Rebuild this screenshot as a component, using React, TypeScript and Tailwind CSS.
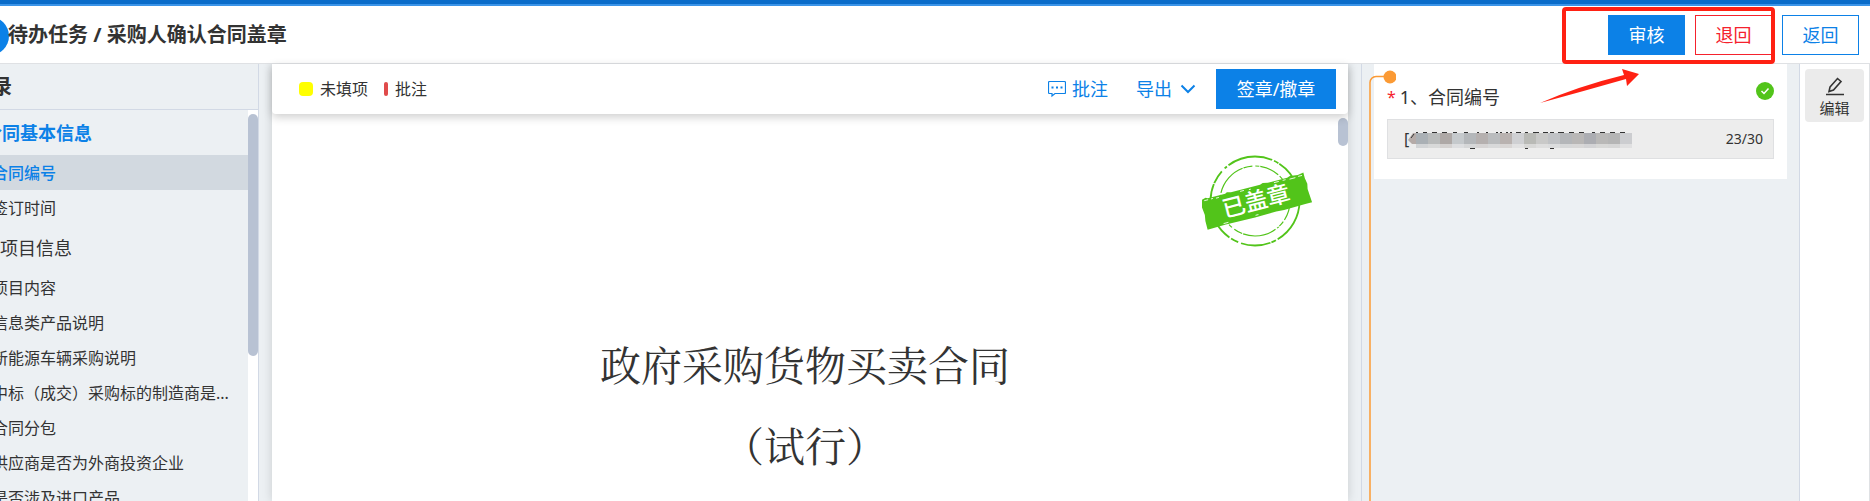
import React from "react";

const sans = "font-['Noto_Sans','Noto_Sans_CJK_SC',sans-serif]";

type Entry = { label: string; kind: "group" | "item"; state?: "open" | "active" };

const entries: Entry[] = [
  { label: "合同基本信息", kind: "group", state: "open" },
  { label: "合同编号", kind: "item", state: "active" },
  { label: "签订时间", kind: "item" },
  { label: "项目信息", kind: "group" },
  { label: "项目内容", kind: "item" },
  { label: "信息类产品说明", kind: "item" },
  { label: "新能源车辆采购说明", kind: "item" },
  { label: "中标（成交）采购标的制造商是...", kind: "item" },
  { label: "合同分包", kind: "item" },
  { label: "供应商是否为外商投资企业", kind: "item" },
  { label: "是否涉及进口产品", kind: "item" },
];

function entryClass(e: Entry) {
  if (e.kind === "group") {
    return e.state === "open"
      ? "h-[45px] -ml-4 text-lg font-bold text-[#0c81e7]"
      : "h-[45px] text-lg";
  }
  return e.state === "active"
    ? "h-[35px] -ml-2 text-base font-medium text-[#0c81e7]"
    : "h-[35px] -ml-2 text-base";
}

function Stamp() {
  return (
    <svg className="absolute top-10 right-6 h-24 w-[112px]" viewBox="0 0 112 96" role="img" aria-label="已盖章">
      <g fill="none" stroke="#52c41a">
        <circle cx="53" cy="47" r="44.5" strokeWidth="1.8" strokeDasharray="46 2 5 1 30 3 8 2 60 1 14 4 3 2" />
        <circle cx="53" cy="47" r="35" strokeWidth="1.2" strokeDasharray="20 2 6 1 2 2 34 1 9 3 4 1" />
      </g>
      <g transform="rotate(-14.500 55 47)">
        <path
          d="M2 32l4-1 2 1h18l2-1 4 1h30l3-1 5 1h20l3-1 8 1 6-1v6l1 6-1 5 1 14-7 0-22 .5-8-.5-22 .5-30-.5-19 .5v-9l1-6-1-9z"
          fill="#52c41a"
        />
        <path
          d="M4 33.500h4m3 0h2m3 .5h3m22-.5h4m5 .5h2m24-.5h5m4 0h3m4 .5h6m3-.5h4m-88 27h5m28 0h3"
          stroke="#fff"
          strokeWidth=".8"
        />
        <text x="54" y="55" textAnchor="middle" fill="#fff" fontSize="23" fontWeight="500">
          已盖章
        </text>
      </g>
    </svg>
  );
}

const tiles = [
  "#aab0b5", "#b9bbbb", "#aea8a6", "#c5c9cc", "#b4b7ba", "#b5b0af", "#babcbe", "#b9b2b0", "#cfd0d3",
  "#b9bab6", "#c9c9c8", "#c0c2c5", "#b4b6b9", "#b9b7b6", "#acadb2", "#b9b8b7", "#b5b5b5", "#cccdd0",
];

function Mosaic() {
  return (
    <svg className="absolute top-3 left-5 h-[18px] w-[228px]" viewBox="0 0 228 18" aria-hidden="true">
      <path
        d="M8 .5h2M15 .5h4M24 .5h5M34 .5h5M45 .5h4M56 .5h4M69 .5h2M78 .5h2M88 .5h2M92 .5h2M98 .5h2M102 .5h2M108 .5h5M117 .5h3M125 .5h6M135 .5h5M142 .5h4M150 .5h6M161 .5h5M171 .5h5M184 .5h3M192 .5h5M202 .5h5M212 .5h5M62 16.500h5M117 16.500h3M142 16.500h4"
        stroke="#333"
        fill="none"
      />
      <path d="M0 8l5-7h3v11H4z" fill="#b5aba8" />
      <path d="M3 6l3-4" stroke="#333" />
      {tiles.map((c, i) => (
        <g key={i} fill={c}>
          <rect x={8 + i * 12} y="1" width="12" height="11" />
          <rect x={8 + i * 12} y="12" width="12" height="4" opacity=".4" />
        </g>
      ))}
    </svg>
  );
}

export default function App() {
  return (
    <div className={`flex h-screen flex-col overflow-hidden bg-[#ecf0f3] text-[#333] ${sans}`}>
      <div className="h-1.5 shrink-0 border-b-2 border-[#3b94e8] bg-[#0a6cc9]" />
      <header className="relative flex h-[58px] shrink-0 items-center justify-between border-b border-[#dfe1e4] bg-white pr-[11px] pl-2">
        <span className="absolute top-[11px] -left-[29px] size-[38px] rounded-full bg-[#0c81e7]" />
        <h1 className="relative text-xl font-bold whitespace-nowrap">待办任务 / 采购人确认合同盖章</h1>
        <div className="flex gap-2.5 text-lg">
          <button className="h-10 w-[77px] bg-[#0c81e7] text-white">审核</button>
          <button className="h-10 w-[77px] border border-[#f5222d] text-[#f5222d]">退回</button>
          <button className="h-10 w-[77px] border border-[#0c81e7] text-[#0c81e7]">返回</button>
        </div>
        <svg className="absolute top-0 right-[93px] z-20 h-[102px] w-[238px]" viewBox="0 0 238 102" aria-hidden="true">
          <rect x="25" y="3" width="209" height="53" rx="2" fill="none" stroke="#ff2113" strokeWidth="4" />
          <path d="M1 97Q40 80 85 69L83 63l17 5-12 12-1-7Q45 85 1 97z" fill="#ff2113" />
        </svg>
      </header>

      <div className="flex min-h-0 flex-1">
        <aside className="flex w-[259px] shrink-0 flex-col overflow-hidden border-r border-[#d2d9e5]">
          <h2 className="flex h-[46px] shrink-0 items-center border-b border-[#d2d9e5] text-xl font-bold">
            <span className="-ml-2">录</span>
          </h2>
          <div className="flex min-h-0 flex-1">
            <ul className="min-w-0 flex-1">
              {entries.map((e) => (
                <li key={e.label} className={e.state === "active" ? "bg-[#d2d9e0]" : ""}>
                  <a href="#" className={`flex items-center whitespace-nowrap ${entryClass(e)}`}>
                    {e.label}
                  </a>
                </li>
              ))}
            </ul>
            <div className="w-2.5 bg-white pt-1">
              <div className="h-[242px] rounded-full bg-[#b8c2d3]" />
            </div>
          </div>
        </aside>

        <main className="ml-[13px] flex min-w-0 flex-1 flex-col bg-white shadow-[0_0_10px_rgba(0,0,0,0.15)]">
          <div className="z-10 flex h-[50px] shrink-0 items-center rounded-b bg-white pr-3 pl-[27px] shadow-[0_3px_10px_rgba(0,0,0,0.2)]">
            <span className="size-3.5 rounded-sm bg-[#ff0]" />
            <span className="ml-[7px] text-base">未填项</span>
            <span className="ml-4 h-3.5 w-1 rounded-sm bg-[#e04b4b]" />
            <span className="ml-[7px] text-base">批注</span>
            <button className="ml-auto flex items-center gap-1.5 text-lg text-[#0c81e7]">
              <svg className="size-[18px]" viewBox="0 0 18 18" fill="none" stroke="currentColor" aria-hidden="true">
                <path
                  d="M1.500 1.500h15a1 1 0 0 1 1 1v10a1 1 0 0 1-1 1H7l-3 2.500v-2.500H1.500a1 1 0 0 1-1-1v-10a1 1 0 0 1 1-1z"
                  strokeWidth="1.2"
                />
                <path d="M3.500 7.500h2m2.500 0h2m2.500 0h2" strokeWidth="2" />
              </svg>
              批注
            </button>
            <button className="ml-7 flex items-center gap-2 text-lg text-[#0c81e7]">
              导出
              <svg className="size-4" viewBox="0 0 16 16" fill="none" stroke="currentColor" strokeWidth="2" aria-hidden="true">
                <path d="M1.500 4.500L8 11l6.500-6.500" />
              </svg>
            </button>
            <button className="ml-5 h-10 w-[120px] bg-[#0c81e7] text-lg text-white">签章/撤章</button>
          </div>
          <div className="flex min-h-0 flex-1">
            <article className="relative flex-1 pt-[209px] text-center font-['Noto_Serif_CJK_SC','Noto_Serif_SC','Liberation_Serif','Noto_Sans_CJK_SC',serif] text-[41px] leading-[81px]">
              <div className={sans}>
                <Stamp />
              </div>
              <p>政府采购货物买卖合同</p>
              <p>（试行）</p>
            </article>
            <div className="w-2.5 bg-white pt-1">
              <div className="h-7 rounded-full bg-[#b8c2d3]" />
            </div>
          </div>
        </main>

        <section className="relative ml-[13px] w-[439px] shrink-0 border-x border-[#d2d9e5] px-3">
          <div className="h-[115px] bg-white px-[13px] pt-5">
            <div className="flex h-[26px] items-center text-lg">
              <span className="mr-1 text-base text-[#f5222d]">*</span>
              <label htmlFor="contract-no">1、合同编号</label>
              <svg className="-mt-3 ml-auto size-[18px]" viewBox="0 0 18 18" aria-hidden="true">
                <circle cx="9" cy="9" r="9" fill="#52c41a" />
                <path d="M5.500 9l2.500 2.500 4.500-5" fill="none" stroke="#fff" strokeWidth="1.5" />
              </svg>
            </div>
            <div className="relative mt-[9px] flex h-10 items-center border border-[#dfe0e2] bg-[#ededed] pr-2.5 pl-4">
              <input
                id="contract-no"
                defaultValue="["
                readOnly
                className="min-w-0 flex-1 bg-transparent text-base outline-none"
              />
              <Mosaic />
              <span className="text-sm">23/30</span>
            </div>
          </div>
          <svg className="absolute top-1.5 left-1.5 h-[431px] w-7" viewBox="0 0 28 431" aria-hidden="true">
            <path d="M22 6.500H8a6 6 0 0 0-6 6V431" fill="none" stroke="#fb9a34" strokeWidth="1.5" />
            <circle cx="22" cy="7" r="6.500" fill="#fb9a34" />
          </svg>
        </section>

        <nav className="flex w-[70px] shrink-0 flex-col items-center border-r border-[#dfe1e4] bg-white pt-[5px]">
          <button className="flex h-[53px] w-[59px] flex-col items-center rounded bg-[#ebebeb] pt-2 text-[15px] leading-5">
            <svg
              className="h-[19px] w-[18px] shrink-0"
              viewBox="0 0 18 19"
              fill="none"
              stroke="#333"
              strokeWidth="1.6"
              aria-hidden="true"
            >
              <path d="M0 17.500h18M4 10l7.500-8.500 3.500 3L7.500 13 3 14.500z" />
            </svg>
            <span className="mt-0.5">编辑</span>
          </button>
        </nav>
      </div>
    </div>
  );
}
